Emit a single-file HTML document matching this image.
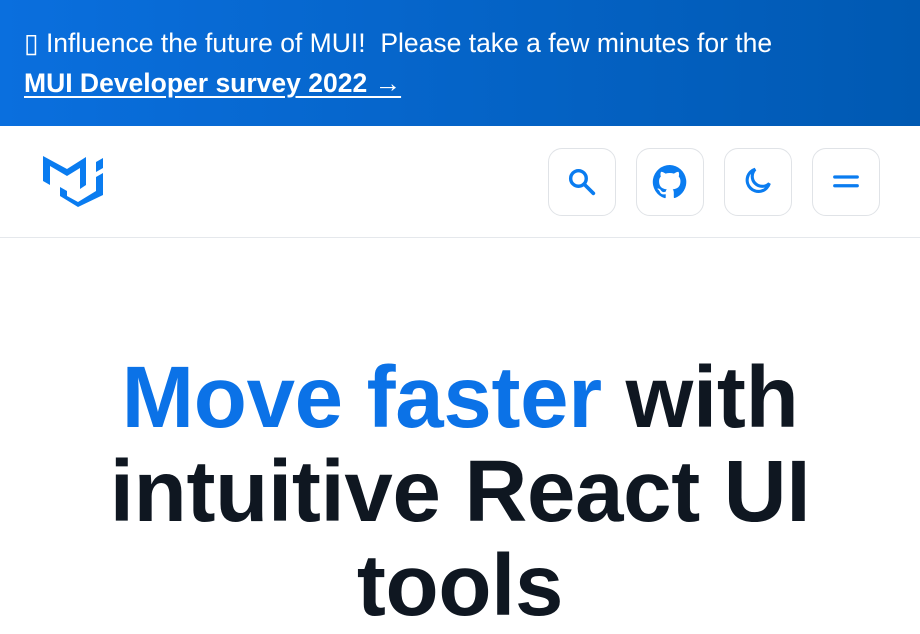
<!DOCTYPE html>
<html><head><meta charset="utf-8"><style>
*{margin:0;padding:0;box-sizing:border-box}
body{width:920px;height:576px;overflow:hidden;background:#fff;font-family:"Liberation Sans",sans-serif}
.banner{height:126px;background:linear-gradient(90deg,#0a6fde,#0059b2);color:#fff;padding:23px 24px 0;font-size:26.5px;line-height:40px}
.banner a{color:#fff;font-weight:bold;text-decoration:underline;text-underline-offset:4px}
.nav{height:112px;border-bottom:1px solid #e5e8ec;position:relative}
.btn{position:absolute;top:22px;width:68px;height:68px;border:1px solid #e0e3e7;border-radius:14px;display:flex;align-items:center;justify-content:center}
h1{text-align:center;font-size:87px;line-height:94px;font-weight:bold;color:#0f1721;margin-top:113px;letter-spacing:-0.3px}
h1 span{color:#0b72e7}
</style></head><body>
<div class="banner">▯ Influence the future of MUI!&nbsp; Please take a few minutes for the<br><a>MUI Developer survey 2022 →</a></div>
<div class="nav">
<svg style="position:absolute;left:43px;top:30px" width="62" height="52" viewBox="0 0 62 52"><path fill="#0a7cf0" d="M0 0 L24 13 L43 1 L43 29 L37 33 L37 12 L24 20 L7 10 L7 29 L0 25 Z M17 31 L24 35 L24 40 L35 46 L53 35 L53 21 L60 17 L60 39 L35 51 L17 40 Z M53 6 L60 2 L60 12 L53 16 Z"/></svg>
<div class="btn" style="left:548px"><svg width="34" height="34" viewBox="0 0 24 24"><circle cx="9.5" cy="9.5" r="5.5" fill="none" stroke="#0a7cf0" stroke-width="2.4"/><path d="M13.5 13.5 L20 20" stroke="#0a7cf0" stroke-width="2.6" stroke-linecap="round"/></svg></div>
<div class="btn" style="left:636px"><svg width="38" height="38" viewBox="0 0 24 24"><path fill="#0a7cf0" d="M12 1.3A10.7 10.7 0 0 0 8.6 22.2c.5.1.7-.2.7-.5v-2c-3 .7-3.6-1.3-3.6-1.3-.5-1.2-1.2-1.6-1.2-1.6-1-.7.1-.7.1-.7 1.1.1 1.6 1.1 1.6 1.1 1 1.6 2.5 1.2 3.1.9.1-.7.4-1.2.7-1.4-2.4-.3-4.9-1.2-4.9-5.3 0-1.2.4-2.1 1.1-2.9-.1-.3-.5-1.4.1-2.9 0 0 .9-.3 2.9 1.1a10 10 0 0 1 5.3 0c2-1.4 2.9-1.1 2.9-1.1.6 1.5.2 2.6.1 2.9.7.8 1.1 1.7 1.1 2.9 0 4.1-2.5 5-4.9 5.3.4.3.7 1 .7 2v2.9c0 .3.2.6.7.5A10.7 10.7 0 0 0 12 1.3z"/></svg></div>
<div class="btn" style="left:724px"><svg width="34" height="34" viewBox="0 0 24 24"><path fill="none" stroke="#0a7cf0" stroke-width="2.2" d="M10 3a8 8 0 1 0 10 10 6.5 6.5 0 0 1-10-10z"/></svg></div>
<div class="btn" style="left:812px"><svg width="30" height="30" viewBox="0 0 24 24"><path d="M3 8h18M3 15h18" stroke="#0a7cf0" stroke-width="2.6" stroke-linecap="round"/></svg></div>
</div>
<h1><span>Move faster</span> with<br>intuitive React UI<br>tools</h1>
</body></html>
